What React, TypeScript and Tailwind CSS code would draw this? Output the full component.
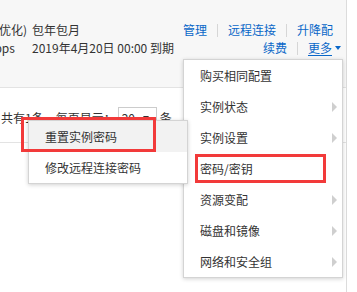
// Dropdown entries of the "更多" menu
const moreItems = [
  { label: "购买相同配置", sub: false },
  { label: "实例状态", sub: true },
  { label: "实例设置", sub: true },
  { label: "密码/密钥", sub: false },
  { label: "资源变配", sub: true },
  { label: "磁盘和镜像", sub: true },
  { label: "网络和安全组", sub: true },
]

const passwordItems = ["重置实例密码", "修改远程连接密码"]

function Sep() {
  return <span className="mx-[10px] inline-block h-[13px] w-px bg-[#d6d6d6]" />
}

export default function App() {
  return (
    <div className="relative h-[292px] w-[357px] overflow-hidden bg-white font-['Noto_Sans_CJK_SC','Noto_Sans',sans-serif] text-[12px] text-[#333]">
      <div className="h-full w-[347px] border-r border-[#dcdcdc]">
        {/* instance row */}
        <div className="flex h-[88px] border-b border-[#e3e3e3] bg-[#f7f7f7] pt-[21px]">
          <div className="-ml-[22px] flex w-[54px] flex-col overflow-hidden whitespace-nowrap leading-[18px]">
            <span>(I/O优化)</span>
            <span>1Mbps</span>
          </div>
          <div className="flex flex-col whitespace-nowrap leading-[18px]">
            <span>包年包月</span>
            <span>2019年4月20日 00:00 到期</span>
          </div>
          <div className="ml-auto flex flex-col items-end whitespace-nowrap pr-[5px] leading-[18px] text-[#0a67c8]">
            <div className="flex items-center pr-[8px]">
              <span>管理</span>
              <Sep />
              <span>远程连接</span>
              <Sep />
              <span>升降配</span>
            </div>
            <div className="flex items-center">
              <span>续费</span>
              <Sep />
              <span className="underline underline-offset-2">更多</span>
              <span className="ml-[3px] h-0 w-0 border-x-[3px] border-t-[4px] border-x-transparent border-t-[#0a67c8]" />
            </div>
          </div>
        </div>

        {/* pager */}
        <div className="mt-[19px] flex h-[22px] items-center whitespace-nowrap">
          <span className="ml-[1px]">共有1条，每页显示：</span>
          <div className="ml-[2px] flex h-[22px] w-[39px] items-center justify-between border border-[#ccc] bg-white pl-[3px] pr-[7px]">
            <span>20</span>
            <span className="h-0 w-0 border-x-[3px] border-t-[4px] border-x-transparent border-t-[#333]" />
          </div>
          <span className="ml-[3px]">条</span>
        </div>
        <div className="mt-[13px] border-t border-[#e3e3e3]" />
      </div>

      {/* 更多 dropdown */}
      <div className="absolute left-[183px] top-[59px] w-[160px] border border-[#d4d4d4] bg-white shadow-[0_1px_4px_rgba(0,0,0,0.18)]">
        {moreItems.map((item) => (
          <div key={item.label} className="flex h-[31px] items-center justify-between pl-[16px] pr-[5px]">
            <span>{item.label}</span>
            {item.sub && (
              <span className="h-0 w-0 border-y-[5px] border-l-[5px] border-y-transparent border-l-[#cfcfcf]" />
            )}
          </div>
        ))}
      </div>

      {/* 密码/密钥 submenu */}
      <div className="absolute left-[28px] top-[120px] w-[160px] border border-[#d4d4d4] bg-white shadow-[0_1px_4px_rgba(0,0,0,0.18)]">
        {passwordItems.map((label, i) => (
          <div key={label} className={`flex h-[31px] items-center pl-[16px] ${i === 0 ? "bg-[#f2f2f2]" : ""}`}>
            {label}
          </div>
        ))}
      </div>

      {/* annotation boxes */}
      <div className="absolute left-[21px] top-[117px] h-[35px] w-[135px] border-[3px] border-[#f23a3a]" />
      <div className="absolute left-[195px] top-[154px] h-[29px] w-[131px] border-[3px] border-[#f23a3a]" />
    </div>
  )
}
